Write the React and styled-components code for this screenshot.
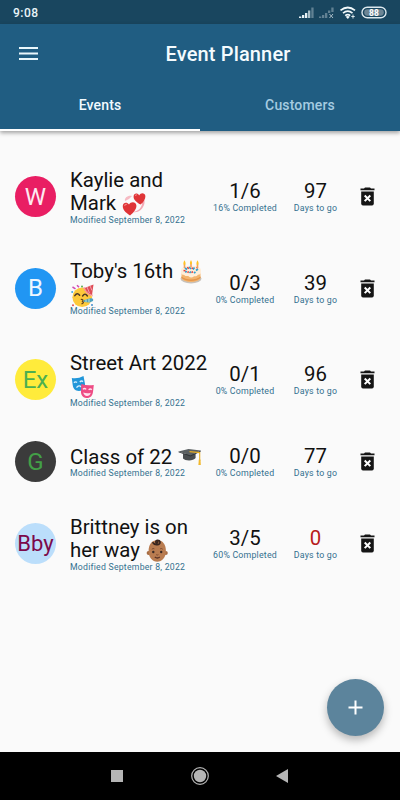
import { useState } from "react";
import styled, { createGlobalStyle } from "styled-components";

const EVENTS = [
  { id: 1, badge: "W", bg: "#e91e63", fg: "#fdeaf1", lines: ["Kaylie and", "Mark"], emoji: "hearts", done: "1/6", percent: 16, days: 97 },
  { id: 2, badge: "B", bg: "#2196f3", fg: "#eef7ff", lines: ["Toby's 16th", ""], emoji: "party", done: "0/3", percent: 0, days: 39 },
  { id: 3, badge: "Ex", bg: "#ffeb3b", fg: "#4caf50", lines: ["Street Art 2022", ""], emoji: "masks", done: "0/1", percent: 0, days: 96 },
  { id: 4, badge: "G", bg: "#3b3b3b", fg: "#43a047", lines: ["Class of 22"], emoji: "cap", done: "0/0", percent: 0, days: 77 },
  { id: 5, badge: "Bby", bg: "#bbdefb", fg: "#7b0a4b", lines: ["Brittney is on", "her way"], emoji: "baby", done: "3/5", percent: 60, days: 0 },
];

const Hearts = () => (
  <Emoji viewBox="0 0 24 24">
    <path d="M15 3C21 3 24 8 22 13C20 18 16 21 11 20C17 19 20 15 20 11C20 7 18 5 15 4Z" fill="#f3a9b5" />
    <path d="M3 9C2 6 6 3 10 4L7 7Z" fill="#f6bac3" />
    <path d="M8 23.5C3 20.5 .5 17 .8 13.8C1 10.3 5.2 9.7 7 12.6C8.8 9.3 13.9 9.7 14.4 13.4C14.8 17 11 21 8 23.5Z" fill="#df3437" />
    <path d="M18.5 12.5C14.5 10.5 11.3 7.6 11.6 4.3C11.8 1.2 15.4.6 17.2 3.4C18.7.1 23 .6 23.4 4C23.6 7.2 21.4 10.3 18.5 12.5Z" fill="#df3437" />
    <path d="M2.7 14C2.8 12.4 4 12 5 12.4M13.5 4C13.6 3 14.4 2.6 15 2.8" stroke="#f58181" strokeWidth="1.1" fill="none" />
  </Emoji>
);

const Cake = () => (
  <Emoji viewBox="-1 0 24 24">
    <ellipse cx="11" cy="18.8" rx="10.5" ry="4.6" fill="#c8c2bb" />
    <path d="M1.5 11V17.5C2.5 23.5 19.5 23.5 20.5 17.5V11Z" fill="#f3b56f" />
    <path d="M1.5 16.5C6 20.5 16 20.5 20.5 16.5V18C16 22 6 22 1.5 18Z" fill="#e4954c" />
    <path d="M1 10C1 4.3 21 4.3 21 10V12.5C20.5 15.5 18.5 14 17.5 15.2C16 17 15 15.6 13.7 16.4C12 18 10 17.6 8.6 16.2C7 15.4 6 17 4.6 15.2C3 14.5 1.2 15 1 12.5Z" fill="#ffeed9" />
    <path d="M5 8L7 9.5M9 7L11 9M14.5 7.5L13 9.5M18 9L16 10.5M5 12L7 11.5M9.5 13L11 11.5M14 13L15.5 12" stroke="#2f9fd0" strokeWidth="1.7" />
    <path d="M7.5 7L8.5 9M12 7.5L12.5 9M3.5 10.5L5.5 10.8M16.5 8L17.5 7.4M11.5 12.6L13 11.6M7.6 12.7L8.6 11.4" stroke="#e0403f" strokeWidth="1.5" />
    <path d="M4.5 4V8M11 3.6V7.2M17.5 4V8" stroke="#f0a05d" strokeWidth="1.6" />
    <path d="M4.5 .3Q2.2 4.4 4.5 5Q6.7 4.4 4.5 .3ZM11 0Q8.8 4 11 4.6Q13.2 4 11 0ZM17.5 .3Q15.3 4.4 17.5 5Q19.8 4.4 17.5 .3Z" fill="#ffc322" />
  </Emoji>
);

const Party = () => (
  <Emoji viewBox="-1 0 24 24">
    <circle cx="11.2" cy="13.3" r="9.8" fill="#fdc93a" />
    <path d="M13.5 4L22.5 .5L21 11C18 10.5 15 8 13.5 4Z" fill="#df4c55" />
    <path d="M16 3L18.5 9M19 1.8L21 6.5" stroke="#f1a0b0" strokeWidth="1" />
    <path d="M13 3.5C14.5 8 18 11 21.7 11.6" stroke="#f593a4" strokeWidth="1.8" strokeDasharray="1.6 .7" fill="none" />
    <path d="M3.8 11.6Q6.3 8 8.6 11.3M11.6 12Q14 8.6 16.4 12" stroke="#4f3925" strokeWidth="1.5" fill="none" strokeLinecap="round" />
    <path d="M9.8 15.5Q13 15.2 11.5 17.4Q13.8 18.2 10.5 20" stroke="#674521" strokeWidth="1.2" fill="none" />
    <path d="M12.5 16.3L19.5 14.3Q23 14 22 17L18.5 18.5L13 18Z" fill="#4ca1c0" />
    <path d="M15 15.6V18M18 14.8V18.3" stroke="#d5e9d1" strokeWidth=".9" />
    <path d="M1.5 3L4.5 4.8M6 1.2L8 3.3" stroke="#d14bb2" strokeWidth="1.5" />
    <circle cx="1.2" cy="8" r="1" fill="#43a9dd" />
    <circle cx="11" cy="2.6" r="1" fill="#56ad54" />
    <circle cx="2" cy="21.2" r="1" fill="#df4c55" />
    <circle cx="21" cy="21" r="1" fill="#438ccb" />
  </Emoji>
);

const Masks = () => (
  <Emoji viewBox="-1 0 24 24">
    <path d="M.8 3Q7 4 12.5 1L14 9C14.5 13 12 16 8 16C4 16 2 13 1.7 10Z" fill="#2196d9" />
    <path d="M3 7.8Q4.5 6 6 7.6M8.8 7Q10.5 5.3 12 6.6M5.5 12.6Q8 9.5 10.3 12" stroke="#d5efff" strokeWidth="1.4" fill="none" />
    <path d="M10.3 9Q16 11 22.8 10L22 17C21.5 21 19 23.4 15.3 23C11.5 22.5 9.6 19.5 10 15.8Z" fill="#ee4b84" />
    <path d="M12 14.4Q13.3 12.6 15.2 14.4M17.6 14.8Q19.4 13.2 20.8 14.8" stroke="#ffe0ed" strokeWidth="1.3" fill="none" />
    <path d="M12.2 17.6Q16 19 19.8 17.8Q18.8 21.2 15.9 21.1Q13.2 20.9 12.2 17.6Z" fill="#ffe0ed" />
  </Emoji>
);

const Cap = () => (
  <Emoji viewBox="0 0 24 24">
    <path d="M5 9V13.5C7 16 15.5 16.2 17.6 13V8.5Z" fill="#4a4e50" />
    <path d="M.5 6.4L10.5 4L22.8 5.6L12.5 10.4Z" fill="#5b6062" />
    <path d="M.5 6.4L12.5 10.4L22.8 5.6V6.6L12.5 11.6L.5 7.3Z" fill="#303437" />
    <path d="M11.5 6.6L21.7 7.6V16" stroke="#e7ad22" strokeWidth="1.1" fill="none" />
    <path d="M20.8 14.5H22.5L22.8 20H20.4Z" fill="#f1b82d" />
  </Emoji>
);

const Baby = () => (
  <Emoji viewBox="0 0 24 24">
    <circle cx="3.6" cy="14" r="2" fill="#a66c43" />
    <circle cx="20.8" cy="14" r="2" fill="#a66c43" />
    <path d="M12.2 1.2C6.2 1.2 3.6 6 3.6 12C3.6 18.5 7.4 22.8 12.2 22.8C17 22.8 20.9 18.5 20.9 12C20.9 6 18.4 1.2 12.2 1.2Z" fill="#b97c50" />
    <path d="M8 3.8C9.8 6.6 15.5 6 15 3C14.5.7 10.2 1 10.9 3.2C11.3 4.5 13 4 12.6 3" fill="none" stroke="#38251e" strokeWidth="1.7" strokeLinecap="round" />
    <circle cx="8.3" cy="13" r="1.2" fill="#392a25" />
    <circle cx="16.2" cy="13" r="1.2" fill="#392a25" />
    <path d="M6.8 10.2Q8 9 9.4 9.8M15.2 9.8Q16.5 9 17.7 10.2M11.2 15.7Q12.3 16.4 13.4 15.7" stroke="#7c492e" strokeWidth="1" fill="none" />
    <path d="M9.8 18Q12.3 20 14.8 18" stroke="#593226" strokeWidth="1.3" fill="none" />
  </Emoji>
);

const EMOJIS = { hearts: Hearts, party: Party, masks: Masks, cap: Cap, baby: Baby };

const EventRow = ({ event }) => {
  const LastEmoji = EMOJIS[event.emoji];
  const last = event.lines.length - 1;

  return (
    <Row $tall={last > 0}>
      <Avatar $bg={event.bg} $fg={event.fg} $small={event.badge.length > 2}>
        {event.badge}
      </Avatar>
      <Info>
        {event.lines.map((line, i) => (
          <Title key={i}>
            {line && <span>{line}</span>}
            {event.emoji === "party" && i === 0 && <Cake />}
            {i === last && <LastEmoji />}
          </Title>
        ))}
        <Modified>Modified September 8, 2022</Modified>
      </Info>
      <Stat>
        <Value>{event.done}</Value>
        <Caption>{event.percent}% Completed</Caption>
      </Stat>
      <Stat>
        <Value $late={event.days === 0}>{event.days}</Value>
        <Caption>Days to go</Caption>
      </Stat>
      <DeleteButton aria-label="Delete">
        <svg width="15" height="19" viewBox="0 0 15 19">
          <path d="M.5 1.5H4L5 .4H10L11 1.5H14.5V3.2H.5Z" fill="#151515" />
          <path d="M1.2 4.6H13.8V16.6Q13.8 18.5 12 18.5H3Q1.2 18.5 1.2 16.6Z" fill="#151515" />
          <path d="M4.7 8.5L10.3 14.1M10.3 8.5L4.7 14.1" stroke="#fff" strokeWidth="2" />
        </svg>
      </DeleteButton>
    </Row>
  );
};

const StatusIcons = () => (
  <svg width="88" height="16" viewBox="0 0 88 16">
    <g fill="#e8f2f6">
      <path d="M0 11.5H2.3V13H0ZM3 10H5.3V13H3ZM6 8H8.3V13H6Z" />
      <path d="M9 5.5H11.3V13H9Z" opacity=".7" />
      <path d="M12.3 2.5H14.6V13H12.3Z" opacity=".35" />
      <path d="M20 11.5H22.3V13H20ZM23 10H25.3V13H23ZM26 8H28.3V13H26ZM29 5.5H31.3V8H29ZM32.3 2.5H34.6V7H32.3Z" opacity=".35" />
    </g>
    <path d="M30.5 9L34 13M34 9L30.5 13" stroke="#a9bcc7" strokeWidth="1" />
    <g fill="none" stroke="#f2f9fb" strokeWidth="1.7">
      <path d="M41.5 5.4Q48.8-.4 56 5.4" />
      <path d="M44 8.1Q48.8 4.2 53.5 8.1" />
      <path d="M46.2 10.7Q48.8 8.7 51.2 10.7" />
    </g>
    <path d="M46.7 11.7Q48.8 10.3 50.8 11.7L48.8 14Z" fill="#f2f9fb" />
    <path d="M54 9.5V13.5M52.3 11.5H55.7" stroke="#dbe8ed" strokeWidth="1" fill="none" />
    <rect x="63" y="2.2" width="24" height="10.6" rx="5.3" fill="none" stroke="#dce8ee" strokeWidth="1.4" />
    <rect x="65.2" y="4.3" width="19.6" height="6.4" rx="3.1" fill="#6c8594" />
    <text x="74.9" y="10.7" textAnchor="middle" fill="#fff" fontSize="8.5" fontWeight="700" fontFamily="Roboto, sans-serif">88</text>
  </svg>
);

const App = () => {
  const [tab, setTab] = useState("Events");

  return (
    <>
      <GlobalStyle />
      <Screen>
        <StatusBar>
          <Clock>9:08</Clock>
          <StatusIcons />
        </StatusBar>
        <Header>
          <Toolbar>
            <MenuButton aria-label="Menu">
              <svg width="19" height="13" viewBox="0 0 19 13">
                <path d="M0 1H19M0 6.5H19M0 12H19" stroke="#e9f7fc" strokeWidth="2" />
              </svg>
            </MenuButton>
            <Heading>Event Planner</Heading>
          </Toolbar>
          <Tabs>
            {["Events", "Customers"].map((name) => (
              <Tab key={name} $active={tab === name} onClick={() => setTab(name)}>{name}</Tab>
            ))}
          </Tabs>
        </Header>
        <List>
          {EVENTS.map((event) => (
            <EventRow key={event.id} event={event} />
          ))}
          <AddButton aria-label="Add event">
            <svg width="15" height="15" viewBox="0 0 15 15">
              <path d="M7.5 .5V14.5M.5 7.5H14.5" stroke="#fff" strokeWidth="2" />
            </svg>
          </AddButton>
        </List>
        <NavBar>
          <svg width="12" height="12" viewBox="0 0 12 12"><path d="M0 0H12V12H0Z" fill="#b5b5b5" /></svg>
          <svg width="18" height="18" viewBox="0 0 18 18">
            <circle cx="9" cy="9" r="8.3" fill="none" stroke="#b5b5b5" strokeWidth="1.2" />
            <circle cx="9" cy="9" r="6.2" fill="#b5b5b5" />
          </svg>
          <svg width="12" height="14" viewBox="0 0 12 14"><path d="M12 0V14L0 7Z" fill="#b5b5b5" /></svg>
        </NavBar>
      </Screen>
    </>
  );
};

const GlobalStyle = createGlobalStyle`
  * { box-sizing: border-box; }
  body {
    margin: 0;
    font-family: Roboto, sans-serif;
  }
  button {
    padding: 0;
    border: none;
    background: none;
    font-family: inherit;
    cursor: pointer;
  }
  svg { display: block; }
`;
const Screen = styled.div`
  width: 400px;
  height: 800px;
  display: flex;
  flex-direction: column;
  overflow: hidden;
  background: #fafafa;
`;
const StatusBar = styled.div`
  height: 24px;
  padding: 1px 13px 0;
  display: flex;
  align-items: center;
  justify-content: space-between;
  background: #19465f;
`;
const Clock = styled.span`
  font-size: 12px;
  font-weight: 500;
  letter-spacing: 0.5px;
  color: #e9f4f8;
`;
const Header = styled.header`
  height: 107px;
  flex-shrink: 0;
  background: #205d82;
  box-shadow: 0 2px 4px rgba(0, 0, 0, 0.35);
  z-index: 1;
`;
const Toolbar = styled.div`
  height: 57px;
  display: grid;
  grid-template-columns: 56px 1fr 0;
  align-items: center;
  padding-top: 2px;
`;
const MenuButton = styled.button`
  display: flex;
  justify-content: center;
`;
const Heading = styled.h1`
  margin: 0;
  text-align: center;
  font-size: 20px;
  font-weight: 500;
  letter-spacing: 0.15px;
  color: #f4fbfe;
`;
const Tabs = styled.div`
  height: 49.5px;
  display: flex;
`;
const Tab = styled.button`
  flex: 1;
  font-size: 14px;
  font-weight: 500;
  letter-spacing: 0.15px;
  color: ${({ $active }) => ($active ? "#f1faff" : "#a5cbe1")};
  border-bottom: 2px solid ${({ $active }) => ($active ? "#fff" : "transparent")};
`;
const List = styled.main`
  flex: 1;
  min-height: 0;
  position: relative;
  padding: 20px 0 0 15px;
`;
const Row = styled.div`
  height: ${({ $tall }) => ($tall ? "91.5px" : "72.5px")};
  display: grid;
  grid-template-columns: 41px 154px 70px 71px 33px;
  align-items: center;
`;
const Avatar = styled.div`
  width: 41px;
  height: 41px;
  border-radius: 50%;
  display: flex;
  align-items: center;
  justify-content: center;
  font-size: ${({ $small }) => ($small ? "22px" : "24px")};
  white-space: nowrap;
  color: ${({ $fg }) => $fg};
  background: ${({ $bg }) => $bg};
`;
const Info = styled.div`
  padding: 1px 0 0 14px;
`;
const Title = styled.div`
  height: 23.5px;
  display: flex;
  align-items: center;
  gap: 5.5px;
  font-size: 20.4px;
  line-height: 23.5px;
  white-space: nowrap;
  color: #111;
`;
const Emoji = styled.svg`
  width: 24px;
  height: 24px;
  flex-shrink: 0;
`;
const Caption = styled.div`
  font-size: 8.8px;
  line-height: 11px;
  letter-spacing: 0.2px;
  white-space: nowrap;
  color: #33708f;
`;
const Modified = styled(Caption)`
  font-size: 8.7px;
  letter-spacing: 0.24px;
  margin-top: -1px;
`;
const Stat = styled.div`
  display: flex;
  flex-direction: column;
  align-items: center;
`;
const Value = styled.div`
  font-size: 20.4px;
  line-height: 24px;
  color: ${({ $late }) => ($late ? "#b71c1c" : "#111")};
`;
const DeleteButton = styled.button`
  display: flex;
  justify-content: center;
`;
const AddButton = styled.button`
  position: absolute;
  right: 16px;
  bottom: 16px;
  width: 57px;
  height: 57px;
  border-radius: 50%;
  display: flex;
  align-items: center;
  justify-content: center;
  background: #5c849c;
  box-shadow: 0 4px 8px rgba(0, 0, 0, 0.28);
`;
const NavBar = styled.nav`
  height: 48px;
  flex-shrink: 0;
  display: flex;
  align-items: center;
  justify-content: space-between;
  padding: 0 112px 0 111px;
  background: #000;
`;
export default App;
